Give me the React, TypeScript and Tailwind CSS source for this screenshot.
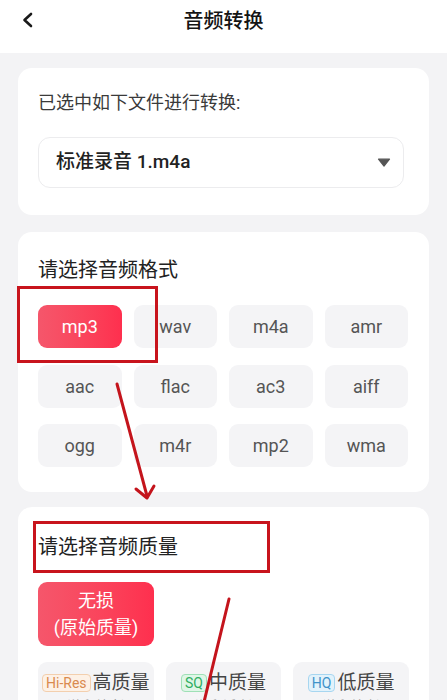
import React from 'react';

const formats = ['mp3', 'wav', 'm4a', 'amr', 'aac', 'flac', 'ac3', 'aiff', 'ogg', 'm4r', 'mp2', 'wma'];

const qualities = [
  { badge: 'Hi-Res', label: '高质量', note: '(体积较大)', badgeCls: 'text-[#d98a4e] bg-[#fdf1e6] border-[#f3cfae]' },
  { badge: 'SQ', label: '中质量', note: '(体积适中)', badgeCls: 'text-[#2fae62] bg-[#dff6e7] border-[#9fe0b6]' },
  { badge: 'HQ', label: '低质量', note: '(体积较小)', badgeCls: 'text-[#3f93c9] bg-[#e2f2fb] border-[#a7d6f0]' }
];

const App = () => {
  const selected = 'mp3';

  return (
    <div className="relative w-full h-[700px] overflow-hidden bg-[#f3f3f5] font-['Roboto','Noto_Sans_CJK_SC',sans-serif]">
      {/* header */}
      <div className="relative h-[53px] bg-white flex items-center justify-center">
        <svg className="absolute left-[21px] top-[12px]" width="13" height="16" viewBox="0 0 13 16" fill="none">
          <polyline points="10,2 3.5,8 10,14" stroke="#1a1a1a" strokeWidth="2.6" strokeLinecap="round" strokeLinejoin="round" />
        </svg>
        <h1 className="text-[20px] leading-[28px] font-medium text-[#141414] -mt-[12px]">音频转换</h1>
      </div>

      <div className="px-[18px] pt-[15px] flex flex-col">
        {/* selected file */}
        <section className="bg-white rounded-[14px] px-[20px] pt-[23px] pb-[27px]">
          <p className="text-[18px] leading-[24px] text-[#3a3a3a]">已选中如下文件进行转换:</p>
          <div className="mt-[22px] h-[51px] w-[366px] border border-[#ececee] rounded-[12px] flex items-center justify-between pl-[17px] pr-[12px]">
            <span className="text-[19px] font-medium text-[#222]">标准录音 1.m4a</span>
            <svg width="14" height="9" viewBox="0 0 14 9">
              <path d="M1.5 1.2 H12.5 L7 8 Z" fill="#555" stroke="#555" strokeWidth="1.2" strokeLinejoin="round" />
            </svg>
          </div>
        </section>

        {/* format */}
        <section className="mt-[17px] bg-white rounded-[14px] px-[20px] pt-[24px] pb-[25px]">
          <h2 className="text-[20px] leading-[28px] text-[#222]">请选择音频格式</h2>
          <div className="mt-[21px] grid grid-cols-4 gap-x-[12px] gap-y-[16.5px] w-[370px]">
            {formats.map((f) => (
              <div
                key={f}
                className={
                  f === selected
                    ? 'h-[43px] rounded-[9px] flex items-center justify-center text-[18px] text-white bg-linear-to-r from-[#f5566b] to-[#fe2f4e]'
                    : 'h-[43px] rounded-[9px] flex items-center justify-center text-[18px] text-[#555] bg-[#f4f4f6]'
                }
              >
                {f}
              </div>
            ))}
          </div>
        </section>

        {/* quality */}
        <section className="mt-[15px] bg-white rounded-[14px] px-[20px] pt-[26px] pb-[20px]">
          <h2 className="text-[20px] leading-[28px] text-[#222]">请选择音频质量</h2>
          <div className="mt-[21px] w-[116px] h-[64px] rounded-[9px] bg-linear-to-r from-[#f5566b] to-[#fe2f4e] flex flex-col items-center justify-center text-white text-[18px] leading-[27px]">
            <span>无损</span>
            <span>(原始质量)</span>
          </div>
          <div className="mt-[16px] grid grid-cols-3 gap-[12px] w-[371px]">
            {qualities.map((q) => (
              <div key={q.label} className="h-[64px] rounded-[9px] bg-[#f4f4f6] flex flex-col items-center pt-[9px]">
                <div className="flex items-center gap-[2px]">
                  <span className={`text-[14px] leading-[16px] px-[3px] border rounded-[4px] ${q.badgeCls}`}>{q.badge}</span>
                  <span className="text-[19px] leading-[24px] text-[#444]">{q.label}</span>
                </div>
                <span className="mt-[2px] text-[13px] leading-[18px] text-[#999]">{q.note}</span>
              </div>
            ))}
          </div>
        </section>
      </div>

      {/* annotations */}
      <div className="absolute left-[17px] top-[286px] w-[141px] h-[77px] border-[3px] border-[#c8141d] pointer-events-none" />
      <div className="absolute left-[33px] top-[521px] w-[237px] h-[52px] border-[3px] border-[#c8141d] pointer-events-none" />
      <svg className="absolute left-0 top-0 pointer-events-none" width="447" height="700" viewBox="0 0 447 700" fill="none">
        <line x1="117" y1="384" x2="147" y2="496" stroke="#c4141c" strokeWidth="3" strokeLinecap="round" />
        <polyline points="136,489 147,498 154,486" stroke="#c4141c" strokeWidth="3" strokeLinecap="round" strokeLinejoin="round" />
        <line x1="229" y1="599" x2="204" y2="702" stroke="#c4141c" strokeWidth="3" strokeLinecap="round" />
      </svg>
    </div>
  );
};

export default App;
